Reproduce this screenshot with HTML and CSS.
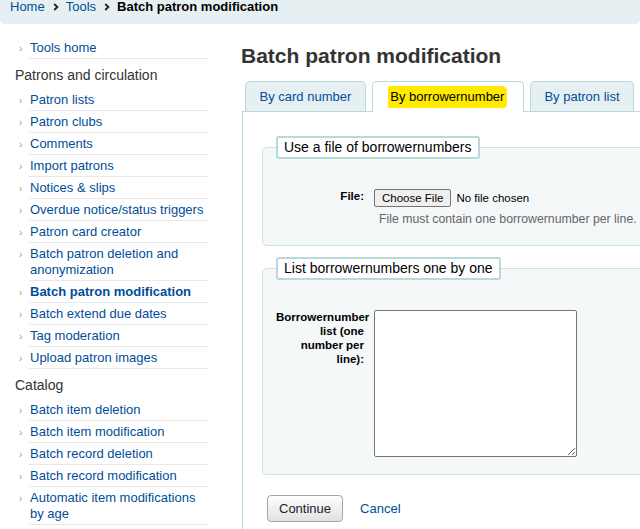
FILE: index.html
```html
<!DOCTYPE html>
<html lang="en">

<head>
    <meta charset="UTF-8">
    <meta name="viewport" content="width=device-width, initial-scale=1.0">
    <title>Batch patron modification</title>
    <link rel="stylesheet" href="styles.css">
</head>

<body>
    <nav class="breadcrumbs">
        <a href="#">Home</a>
        <span class="sep"><svg width="6" height="8" viewBox="0 0 6 8"><path d="M1.2 1l3.2 3-3.2 3" fill="none" stroke="#222" stroke-width="1.8"/></svg></span>
        <a href="#">Tools</a>
        <span class="sep"><svg width="6" height="8" viewBox="0 0 6 8"><path d="M1.2 1l3.2 3-3.2 3" fill="none" stroke="#222" stroke-width="1.8"/></svg></span>
        <strong>Batch patron modification</strong>
    </nav>

    <div class="main">
        <aside class="navmenu">
            <ul>
                <li><a href="#">Tools home</a></li>
            </ul>
            <h5>Patrons and circulation</h5>
            <ul>
                <li><a href="#">Patron lists</a></li>
                <li><a href="#">Patron clubs</a></li>
                <li><a href="#">Comments</a></li>
                <li><a href="#">Import patrons</a></li>
                <li><a href="#">Notices &amp; slips</a></li>
                <li><a href="#">Overdue notice/status triggers</a></li>
                <li><a href="#">Patron card creator</a></li>
                <li><a href="#">Batch patron deletion and anonymization</a></li>
                <li class="current"><a href="#">Batch patron modification</a></li>
                <li><a href="#">Batch extend due dates</a></li>
                <li><a href="#">Tag moderation</a></li>
                <li><a href="#">Upload patron images</a></li>
            </ul>
            <h5>Catalog</h5>
            <ul>
                <li><a href="#">Batch item deletion</a></li>
                <li><a href="#">Batch item modification</a></li>
                <li><a href="#">Batch record deletion</a></li>
                <li><a href="#">Batch record modification</a></li>
                <li><a href="#">Automatic item modifications by age</a></li>
            </ul>
        </aside>

        <section class="content">
            <h1>Batch patron modification</h1>

            <ul class="tabs">
                <li><a href="#">By card number</a></li>
                <li class="active"><a href="#"><span class="marker">By borrowernumber</span></a></li>
                <li><a href="#">By patron list</a></li>
            </ul>

            <div class="tab-panel">
                <form>
                    <fieldset class="rows">
                        <legend>Use a file of borrowernumbers</legend>
                        <div class="row">
                            <label for="uploadfile">File:</label>
                            <div class="field">
                                <input type="file" id="uploadfile" name="uploadfile">
                                <div class="hint">File must contain one borrowernumber per line.</div>
                            </div>
                        </div>
                    </fieldset>

                    <fieldset class="rows second">
                        <legend>List borrowernumbers one by one</legend>
                        <div class="row">
                            <label for="borrowernumberlist">Borrowernumber list (one number per line):</label>
                            <div class="field">
                                <textarea id="borrowernumberlist" name="borrowernumberlist"></textarea>
                            </div>
                        </div>
                    </fieldset>

                    <div class="action">
                        <button type="button">Continue</button>
                        <a href="#" class="cancel">Cancel</a>
                    </div>
                </form>
            </div>
        </section>
    </div>
</body>

</html>
```

FILE: styles.css
```css
html,
body {
    overflow: hidden;
}

body {
    margin: 0;
    font-family: "Liberation Sans", Arial, sans-serif;
    font-size: 13px;
    color: #000;
    background-color: #fff;
}

a {
    color: #004d99;
    text-decoration: none;
}

/* breadcrumb bar, page is scrolled a little so its top is cut */
.breadcrumbs {
    display: flex;
    align-items: center;
    height: 24px;
    box-sizing: border-box;
    padding: 0 10px 10px;
    line-height: 14px;
    background-color: #e6f0f2;
    border-radius: 0 0 5px 5px;
}

.breadcrumbs .sep {
    display: flex;
    margin: 0 7px 0 8px;
}

.breadcrumbs strong {
    color: #000;
}

.main {
    display: flex;
    width: 760px;
}

/* left menu */
.navmenu {
    width: 194px;
    flex-shrink: 0;
    padding-left: 15px;
}

.navmenu ul {
    list-style: none;
    margin: 0;
    padding: 0 0 0 14px;
}

.navmenu > ul:first-child {
    margin-top: 13px;
}

.navmenu li {
    padding: 3px 0 2px 1px;
    line-height: 16px;
    border-bottom: 1px solid #e8e8e8;
}

.navmenu li::before {
    content: "\203A";
    display: inline-block;
    width: 11px;
    margin-left: -11px;
    font-size: 10px;
    line-height: 10px;
    color: #999;
}

.navmenu li.current a {
    font-weight: bold;
}

.navmenu h5 {
    margin: 7px 0 5px;
    font-size: 14px;
    font-weight: normal;
    line-height: 18px;
    color: #333;
}

/* main column */
.content {
    width: 520px;
    flex-shrink: 0;
    margin-left: 33px;
}

h1 {
    margin: 19px 0 13px -1px;
    font-size: 21px;
    line-height: 25px;
    color: #333;
}

.tabs {
    display: flex;
    align-items: flex-end;
    gap: 6px;
    list-style: none;
    margin: 0;
    padding: 0 0 0 3px;
}

.tabs li {
    border: 1px solid #b9d8d9;
    border-bottom: none;
    border-radius: 5px 5px 0 0;
    background-color: #e6f0f2;
    padding: 7px 13.5px 7px;
    line-height: 15px;
}

.tabs li.active {
    position: relative;
    background-color: #fff;
    padding: 7px 15.5px 8px;
    margin-bottom: -1px;
}

.tabs li.active a {
    color: #000;
}

/* the yellow highlighter stroke over the active tab */
.marker {
    background-color: #ffea00;
    padding: 3px 3px 4px 2px;
    border-radius: 2px 5px 4px 1px;
}

.tab-panel {
    border: 1px solid #b9d8d9;
    background-color: #fff;
    padding: 24px 0 40px 19px;
}

fieldset.rows {
    width: 460px;
    margin: 0;
    padding: 0 0 18px 13px;
    background-color: #f4f8f9;
    border: 1px solid #cde2e3;
    border-radius: 5px;
}

fieldset.second {
    margin-top: 11px;
    padding-bottom: 17px;
}

legend {
    padding: 2px 6px;
    font-size: 14px;
    line-height: 15px;
    color: #000;
    background-color: #fff;
    border: 2px solid #b9d8d9;
    border-radius: 3px;
}

.row {
    display: flex;
    align-items: flex-start;
    margin-top: 30px;
}

.row label {
    width: 88px;
    margin-right: 10px;
    text-align: right;
    font-size: 11.5px;
    font-weight: bold;
    line-height: 14px;
}

.field input[type="file"] {
    display: block;
    font-family: "Liberation Sans", Arial, sans-serif;
    font-size: 11.5px;
    line-height: 14px;
    color: #000;
}

.field input[type="file"]::file-selector-button {
    font: inherit;
    padding: 1px 7px;
    margin-right: 5px;
    background-color: #efefef;
    border: 1px solid #767676;
    border-radius: 2px;
}

.hint {
    margin-top: 5px;
    padding-left: 5px;
    font-size: 12.3px;
    line-height: 15px;
    color: #666;
}

textarea {
    display: block;
    width: 203px;
    height: 147px;
    box-sizing: border-box;
    margin: 0;
    border: 1px solid #767676;
    border-radius: 2px;
}

.action {
    display: flex;
    align-items: center;
    margin: 20px 0 0 5px;
}

.action button {
    padding: 5px 11px;
    font-family: "Liberation Sans", Arial, sans-serif;
    font-size: 13px;
    line-height: 15px;
    color: #222;
    background: linear-gradient(#fdfdfd, #e2e2e2);
    border: 1px solid #a6a6a6;
    border-radius: 4px;
}

.action .cancel {
    margin-left: 17px;
}
```
